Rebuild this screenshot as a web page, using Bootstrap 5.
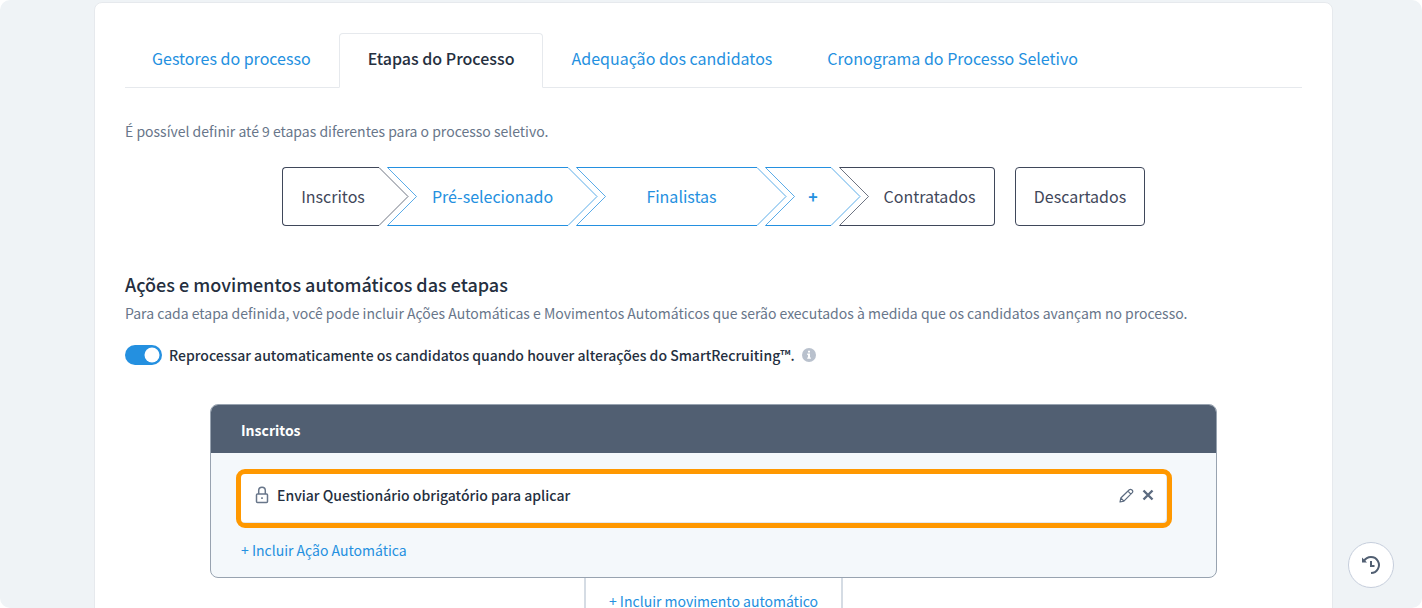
<!DOCTYPE html>
<html lang="pt-BR">
<head>
<meta charset="utf-8">
<meta name="viewport" content="width=device-width, initial-scale=1">
<title>Etapas do Processo</title>
<link rel="stylesheet" href="https://cdn.jsdelivr.net/npm/bootstrap@5.3.0/dist/css/bootstrap.min.css">
<style>
  :root { --ink: #252f40; --outline: #3f475a; --muted: #68768a; --blue: #2490e0; --line: #e6e9ed; }
  html { background: #fff; }
  body { font-family: "Noto Sans CJK JP", "Open Sans", sans-serif; font-size: 14px; line-height: 24px; color: var(--ink); background: #fff; }
  a { color: var(--blue); text-decoration: none; }
  .page-shell { height: 100vh; padding: 2px 89px 0 94px; background: #eff3f6; border-radius: 10px; overflow: hidden; }
  .main-panel { min-height: 100%; padding: 30px 30px 0; background: #fff; border: 1px solid var(--line); border-radius: 8px; }
  .nav-tabs { --bs-nav-tabs-border-color: var(--line); --bs-nav-tabs-border-radius: 4px; gap: 1px; }
  .nav-tabs .nav-link { padding: 12px 26px 17px; font-size: 16px; color: var(--blue); }
  .nav-tabs .nav-link.active { padding: 12px 28px 17px; font-weight: 500; color: var(--ink); border-color: var(--line) var(--line) #fff; }
  .hint { margin: 31px 0 24px; color: var(--muted); }
  .stage { display: flex; height: 59px; padding: 0; border: 0; background: none; color: var(--outline); font-size: 16px; }
  .stage + .stage { margin-left: -22px; }
  .stage-blue { color: var(--blue); }
  .stage svg { width: 30px; height: 59px; flex: none; fill: none; stroke: currentColor; }
  .stage .slant { stroke-opacity: .75; }
  .stage-label { flex: 1; height: 59px; line-height: 57px; border: solid currentColor; border-width: 1px 0; }
  .stage-first { width: 127px; }
  .stage-first .stage-label { border-left-width: 1px; border-radius: 4px 0 0 4px; padding-left: 4px; }
  .stage-wide { width: 211px; }
  .stage-add { width: 96px; font-weight: 700; }
  .stage-last { width: 156px; }
  .stage-last .stage-label { border-right-width: 1px; border-radius: 0 4px 4px 0; padding-right: 4px; }
  .stage-out { width: 130px; margin-left: 20px; }
  .stage-out .stage-label { border-width: 1px; border-radius: 4px; }
  h2 { margin: 45px 0 4px; font-size: 18px; line-height: 26px; font-weight: 500; }
  .lead-in { margin: 0 0 18px; color: var(--muted); }
  .reprocess { display: flex; align-items: center; gap: 7px; min-height: 24px; padding: 0; margin: 0; font-weight: 500; }
  .reprocess .form-check-input { width: 37px; height: 20px; margin: 0; float: none; border: 0; box-shadow: none;
    background-color: var(--blue); background-size: 20px; }
  .flow { margin: 37px 85px 0; }
  .stage-card { border: 1px solid #98a3b0; border-radius: 8px; background: #f4f8fb; overflow: hidden; }
  .stage-card header { height: 48px; padding: 0 30px; line-height: 50px; background: #515f72; color: #fff; font-weight: 700; }
  .stage-card .stage-body { padding: 16px 44px 15px 25px; }
  .action-row { display: flex; align-items: center; height: 59px; padding: 0 13px 7px 14px; background: #fff;
    border: 5px solid #ff9800; border-radius: 9px; box-shadow: inset -1px -1px 0 #e3e9f0; font-weight: 500; }
  .action-row button { display: flex; padding: 0; border: 0; background: none; color: #5c6b80; }
  .add-action { display: inline-block; margin: 10px 0 0 5px; }
  .add-move { width: 259px; height: 60px; margin: 0 auto; padding-top: 16px; line-height: 14px; border: 2px solid #d5dce4; border-top: 0; text-align: center; }
  .add-move a { display: block; }
  .history { right: 28px; bottom: 20px; width: 46px; height: 46px; border: 1px solid #c5cddb; border-radius: 50%; background: #fff; color: #515f72; }
</style>
</head>
<body>
<div class="page-shell">
  <main class="main-panel">
    <ul class="nav nav-tabs">
      <li class="nav-item"><a class="nav-link" href="#gestores">Gestores do processo</a></li>
      <li class="nav-item"><a class="nav-link active" aria-current="page" href="#etapas">Etapas do Processo</a></li>
      <li class="nav-item"><a class="nav-link" href="#adequacao">Adequação dos candidatos</a></li>
      <li class="nav-item"><a class="nav-link" href="#cronograma">Cronograma do Processo Seletivo</a></li>
    </ul>

    <p class="hint">É possível definir até 9 etapas diferentes para o processo seletivo.</p>

    <div class="d-flex justify-content-center">
      <button type="button" class="stage stage-first">
        <span class="stage-label">Inscritos</span>
        <svg viewBox="0 0 30 59"><path class="slant" d="M0 .5 29 29.5 0 58.5"/></svg>
      </button>
      <button type="button" class="stage stage-wide stage-blue">
        <svg viewBox="0 0 30 59"><path d="M30 .5H.5M.5 58.5H30"/><path class="slant" d="m.5.5 29 29-29 29"/></svg>
        <span class="stage-label">Pré-selecionado</span>
        <svg viewBox="0 0 30 59"><path class="slant" d="M0 .5 29 29.5 0 58.5"/></svg>
      </button>
      <button type="button" class="stage stage-wide stage-blue">
        <svg viewBox="0 0 30 59"><path d="M30 .5H.5M.5 58.5H30"/><path class="slant" d="m.5.5 29 29-29 29"/></svg>
        <span class="stage-label">Finalistas</span>
        <svg viewBox="0 0 30 59"><path class="slant" d="M0 .5 29 29.5 0 58.5"/></svg>
      </button>
      <button type="button" class="stage stage-add stage-blue" aria-label="Adicionar etapa">
        <svg viewBox="0 0 30 59"><path d="M30 .5H.5M.5 58.5H30"/><path class="slant" d="m.5.5 29 29-29 29"/></svg>
        <span class="stage-label">+</span>
        <svg viewBox="0 0 30 59"><path class="slant" d="M0 .5 29 29.5 0 58.5"/></svg>
      </button>
      <button type="button" class="stage stage-last">
        <svg viewBox="0 0 30 59"><path d="M30 .5H.5M.5 58.5H30"/><path class="slant" d="m.5.5 29 29-29 29"/></svg>
        <span class="stage-label">Contratados</span>
      </button>
      <div><button type="button" class="stage stage-out"><span class="stage-label">Descartados</span></button></div>
    </div>

    <h2>Ações e movimentos automáticos das etapas</h2>
    <p class="lead-in">Para cada etapa definida, você pode incluir Ações Automáticas e Movimentos Automáticos que serão executados à medida que os candidatos avançam no processo.</p>

    <div class="form-check form-switch reprocess">
      <input class="form-check-input" type="checkbox" role="switch" id="reprocess" checked>
      <label for="reprocess">Reprocessar automaticamente os candidatos quando houver alterações do SmartRecruiting™.</label>
      <svg width="14" height="14" viewBox="0 0 14 14" aria-hidden="true"><circle cx="7" cy="7" r="7" fill="#b9c1cd"/><path fill="#fff" d="M6 2.8h2v1.7H6zM5.2 5.6H8v3.9h.9v1.3H5.2V9.5H6V6.900h-.8z"/></svg>
    </div>

    <div class="flow">
      <section class="stage-card">
        <header>Inscritos</header>
        <div class="stage-body">
          <div class="action-row">
            <svg width="14" height="18" viewBox="0 0 14 18" fill="none" stroke="#68768a" stroke-width="1.5" aria-hidden="true"><rect x="1.500" y="8" width="11" height="8.500" rx="1"/><path d="M3.700 8V4.500a3.300 3.300 0 0 1 6.600 0V8"/><path d="M6.200 12.200h1.600" stroke-width="1.800"/></svg>
            <span class="ms-2 me-auto">Enviar Questionário obrigatório para aplicar</span>
            <button type="button" aria-label="Editar"><svg width="15" height="15" viewBox="0 0 15 15" fill="none" stroke="currentColor" stroke-width="1.200" stroke-linejoin="round"><path d="m1 14 .8-4 8.500-8.300q1.300-1 2.700.3t.3 2.700L4.900 13.100zM8.900 3.100l3 3M1.800 10l3.100 3.100"/></svg></button>
            <button type="button" class="ms-2" aria-label="Remover"><svg width="12" height="12" viewBox="0 0 12 12" fill="none" stroke="currentColor" stroke-width="2.400"><path d="m1.500 1.500 9 9m0-9-9 9"/></svg></button>
          </div>
          <a class="add-action" href="#acao">+ Incluir Ação Automática</a>
        </div>
      </section>
      <div class="add-move"><a href="#movimento">+ Incluir movimento automático</a></div>
    </div>
  </main>
</div>
<button type="button" class="history position-fixed d-flex align-items-center justify-content-center p-0" aria-label="Histórico">
  <svg width="20" height="20" viewBox="0 0 20 20" fill="none" stroke="currentColor" stroke-width="2"><path d="M3 6a8 8 0 1 1 7 12M10 6v5h3.500"/><path d="M1 2.500v5h5z" fill="currentColor" stroke="none"/></svg>
</button>
<script src="https://cdn.jsdelivr.net/npm/bootstrap@5.3.0/dist/js/bootstrap.bundle.min.js"></script>
</body>
</html>
